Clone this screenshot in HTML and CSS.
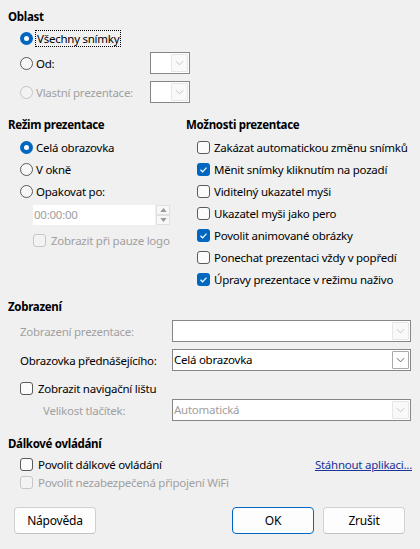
FILE: index.html
```html
<!DOCTYPE html>
<html lang="cs">
<head>
<meta charset="utf-8">
<title>Prezentace</title>
<link rel="stylesheet" href="styles.css">
</head>
<body>
<div class="dlg">
  <div class="h h-first">Oblast</div>
  <div class="sec">
    <div class="row r-all">
      <span class="radio on"></span><span class="lbl-r focus">Všechny snímky</span>
    </div>
    <div class="row r-od">
      <div class="opt w130"><span class="radio"></span><span class="lbl-r">Od:</span></div>
      <div class="combo c-small"><span class="cval"></span><span class="cbtn"><svg viewBox="0 0 10 6" width="9" height="6"><polyline points="1,1 5,5 9,1" /></svg></span></div>
    </div>
    <div class="row r-own dis">
      <div class="opt w130"><span class="radio"></span><span class="lbl-r">Vlastní prezentace:</span></div>
      <div class="combo c-small"><span class="cval"></span><span class="cbtn"><svg viewBox="0 0 10 6" width="9" height="6"><polyline points="1,1 5,5 9,1" /></svg></span></div>
    </div>
  </div>

  <div class="cols">
    <div class="col-left">
      <div class="h">Režim prezentace</div>
      <div class="list-l">
        <div class="row"><span class="radio on"></span><span class="lbl-r">Celá obrazovka</span></div>
        <div class="row"><span class="radio"></span><span class="lbl-r">V okně</span></div>
        <div class="row"><span class="radio"></span><span class="lbl-r">Opakovat po:</span></div>
      </div>
      <div class="spin-wrap">
        <div class="spin">
          <span class="spin-field">00:00:00</span>
          <span class="spin-btns">
            <span class="sb"><svg viewBox="0 0 8 5" width="7" height="4"><polygon points="0,5 4,0 8,5" /></svg></span>
            <span class="sb"><svg viewBox="0 0 8 5" width="7" height="4"><polygon points="0,0 8,0 4,5" /></svg></span>
          </span>
        </div>
        <div class="row r-logo dis"><span class="chk"></span><span class="lbl-c">Zobrazit při pauze logo</span></div>
      </div>
    </div>
    <div class="col-right">
      <div class="h">Možnosti prezentace</div>
      <div class="list-r">
        <div class="row"><span class="chk"></span><span class="lbl-c2">Zakázat automatickou změnu snímků</span></div>
        <div class="row"><span class="chk on"><svg viewBox="0 0 13 13" width="13" height="13"><polyline points="3.5,6.8 5.6,8.8 9.5,4.6" /></svg></span><span class="lbl-c2">Měnit snímky kliknutím na pozadí</span></div>
        <div class="row"><span class="chk"></span><span class="lbl-c2">Viditelný ukazatel myši</span></div>
        <div class="row"><span class="chk"></span><span class="lbl-c2">Ukazatel myši jako pero</span></div>
        <div class="row"><span class="chk on"><svg viewBox="0 0 13 13" width="13" height="13"><polyline points="3.5,6.8 5.6,8.8 9.5,4.6" /></svg></span><span class="lbl-c2">Povolit animované obrázky</span></div>
        <div class="row"><span class="chk"></span><span class="lbl-c2">Ponechat prezentaci vždy v popředí</span></div>
        <div class="row"><span class="chk on"><svg viewBox="0 0 13 13" width="13" height="13"><polyline points="3.5,6.8 5.6,8.8 9.5,4.6" /></svg></span><span class="lbl-c2">Úpravy prezentace v režimu naživo</span></div>
      </div>
    </div>
  </div>

  <div class="h h-view">Zobrazení</div>
  <div class="sec">
    <div class="row r-pres dis">
      <div class="flabel">Zobrazení prezentace:</div>
      <div class="combo c-wide"><span class="cval"></span><span class="cbtn"><svg viewBox="0 0 10 6" width="9" height="6"><polyline points="1,1 5,5 9,1" /></svg></span></div>
    </div>
    <div class="row r-scr">
      <div class="flabel">Obrazovka přednášejícího:</div>
      <div class="combo c-wide en"><span class="cval">Celá obrazovka</span><span class="cbtn"><svg viewBox="0 0 10 6" width="9" height="6"><polyline points="1,1 5,5 9,1" /></svg></span></div>
    </div>
    <div class="row r-nav"><span class="chk"></span><span class="lbl-c">Zobrazit navigační lištu</span></div>
    <div class="row r-size dis">
      <div class="flabel indent">Velikost tlačítek:</div>
      <div class="combo c-wide"><span class="cval">Automatická</span><span class="cbtn"><svg viewBox="0 0 10 6" width="9" height="6"><polyline points="1,1 5,5 9,1" /></svg></span></div>
    </div>
  </div>

  <div class="h h-remote">Dálkové ovládání</div>
  <div class="sec">
    <div class="row r-rem">
      <span class="chk"></span><span class="lbl-c">Povolit dálkové ovládání</span>
      <a class="link" href="#">Stáhnout aplikaci...</a>
    </div>
    <div class="row r-wifi dis"><span class="chk"></span><span class="lbl-c">Povolit nezabezpečená připojení WiFi</span></div>
  </div>

  <div class="buttons">
    <button class="btn">Nápověda</button>
    <span class="spacer"></span>
    <button class="btn ok">OK</button>
    <button class="btn">Zrušit</button>
  </div>
</div>
</body>
</html>
```

FILE: styles.css
```css
* { box-sizing: border-box; }
html, body { margin: 0; padding: 0; }
body {
  background: #f0f0f0;
  color: #000;
  font-family: "Noto Sans", "Open Sans", sans-serif;
  font-size: 11.5px;
  letter-spacing: -0.25px;
  width: 420px;
  height: 549px;
  overflow: hidden;
}
.dlg { padding: 0 0 0 8px; }
.h {
  font-weight: 700;
  height: 16px;
  line-height: 16px;
  letter-spacing: -0.3px;
}
.h-first { margin-top: 9px; }
.sec { padding-left: 12px; }
.row {
  display: flex;
  align-items: center;
  height: 22px;
  white-space: nowrap;
}
.r-all { margin-top: 2px; }
.r-od { margin-top: 3px; }
.r-own { margin-top: 7px; }
.opt { display: flex; align-items: center; }
.w130 { width: 130px; flex: none; }

.radio {
  width: 13px; height: 13px;
  border-radius: 50%;
  border: 1px solid #5b5b5b;
  background: #f7f7f7;
  flex: none;
  position: relative;
}
.radio.on {
  border: none;
  background: #0067c0;
}
.radio.on::after {
  content: "";
  position: absolute;
  left: 4px; top: 4px;
  width: 5px; height: 5px;
  border-radius: 50%;
  background: #fff;
}
.dis .radio { border-color: #c4c4c4; background: #f3f3f3; }
.lbl-r { margin-left: 3px; }
.focus { outline: 1px dotted #000; outline-offset: 0; padding: 0 1px; margin-left: 3px; line-height: 15px; }

.chk {
  width: 13px; height: 13px;
  border-radius: 3px;
  border: 1px solid #5b5b5b;
  background: #fbfbfb;
  flex: none;
  display: flex;
}
.chk.on { border: none; background: #0067c0; }
.chk svg polyline { fill: none; stroke: #fff; stroke-width: 1.2; }
.dis .chk { border-color: #c6c6c6; background: #f3f3f3; }
.lbl-c { margin-left: 5px; }
.lbl-c2 { margin-left: 4px; }
.dis { color: #a0a0a0; }

.combo {
  height: 22px;
  border: 1px solid #868686;
  background: #fff;
  display: flex;
  align-items: stretch;
  flex: none;
}
.c-small { width: 40px; height: 22px; }
.c-wide { width: 239px; }
.cval {
  flex: 1;
  line-height: 20px;
  padding-left: 1px;
  overflow: hidden;
}
.cbtn {
  width: 17px;
  margin: 1px;
  border: 1px solid #e6e6e6;
  background: #f9f9f9;
  display: flex;
  align-items: center;
  justify-content: center;
  border-radius: 1px;
}
.cbtn svg polyline { fill: none; stroke: #b8b8b8; stroke-width: 0.9; }
.combo.en .cbtn { border-color: #a9a9a9; background: #fff; }
.combo.en .cbtn svg polyline { stroke: #444; }

.cols { display: flex; margin-top: 14px; }
.col-left { width: 178px; flex: none; }
.list-l { padding-left: 12px; margin-top: 3px; }
.spin-wrap { padding-left: 25px; }
.spin { display: flex; margin-top: 3px; height: 20px; }
.spin-field {
  width: 122px;
  background: #fff;
  color: #a0a0a0;
  line-height: 20px;
  padding-left: 1px;
}
.spin-btns { display: flex; flex-direction: column; margin-left: 1px; width: 14px; }
.sb {
  height: 10px;
  border: 1px solid #e0e0e0;
  background: #f8f8f8;
  display: flex; align-items: center; justify-content: center;
}
.sb svg polygon { fill: #9a9a9a; }
.r-logo { margin-top: 4px; }
.col-right { flex: 1; min-width: 0; }
.list-r { padding-left: 11px; margin-top: 3px; }

.h-view { margin-top: 9px; }
.r-pres { margin-top: 5px; }
.r-scr { margin-top: 7px; }
.r-nav { margin-top: 6px; }
.r-size { margin-top: 0; }
.flabel { width: 152px; flex: none; }
.flabel.indent { padding-left: 23px; }

.h-remote { margin-top: 15px; }
.r-rem { margin-top: 3px; height: 18px; }
.r-wifi { height: 18px; }
.link {
  margin-left: auto;
  margin-right: 8px;
  color: #1a3399;
  text-decoration: underline;
}

.buttons {
  display: flex;
  margin-top: 16px;
  padding-left: 6px;
  padding-right: 15px;
}
.spacer { flex: 1; }
.btn {
  width: 82px;
  height: 27px;
  font-family: inherit;
  font-size: 12px;
  letter-spacing: -0.2px;
  color: #000;
  background: #fdfdfd;
  border: 1px solid #d0d0d0;
  border-bottom-color: #c2c2c2;
  border-radius: 4px;
  padding: 0;
}
.btn.ok { border-color: #0067c0; margin-right: 9px; }
```
